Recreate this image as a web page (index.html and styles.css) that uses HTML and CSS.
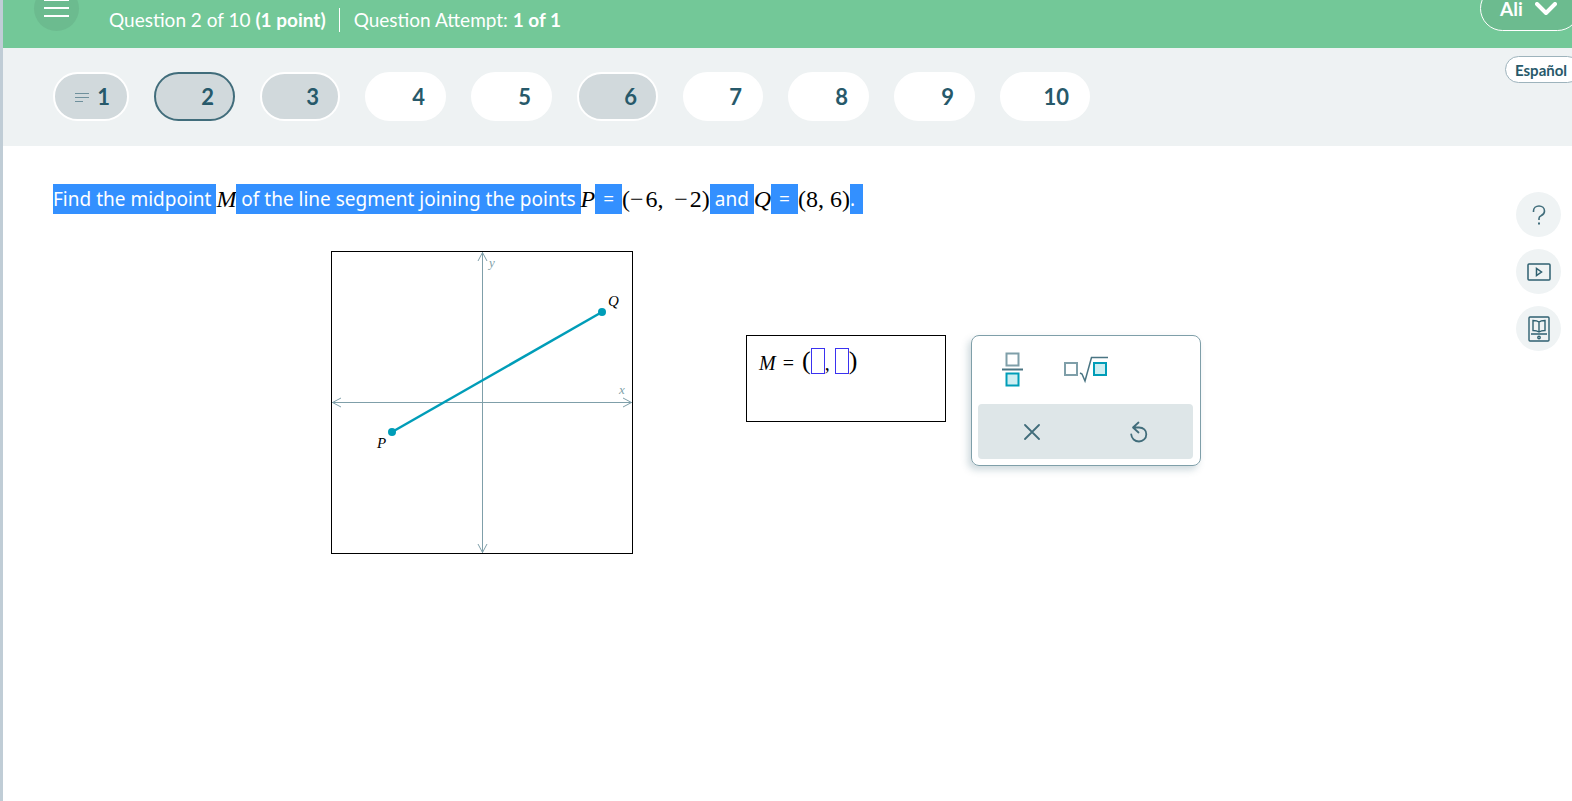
FILE: index.html
```html
<!DOCTYPE html>
<html lang="en">
<head>
    <meta charset="UTF-8">
    <meta name="viewport" content="width=device-width, initial-scale=1.0">
    <title>Question 2 of 10</title>
    <link rel="stylesheet" href="styles.css">
</head>
<body>
    <header class="topbar">
        <button class="menu-btn" aria-label="Menu">
            <svg width="26" height="20" viewBox="0 0 26 20" stroke="#fff" stroke-width="2">
                <path d="M0 1H25M0 9H25M0 17H25"/>
            </svg>
        </button>
        <p class="progress">Question 2 of 10 <b>(1 point)</b></p>
        <p class="attempt">Question Attempt: <b>1 of 1</b></p>
        <button class="user-btn">Ali
            <svg width="22" height="14" viewBox="0 0 22 14" fill="none" stroke="#fff" stroke-width="4" stroke-linecap="round" stroke-linejoin="round">
                <path d="M2 2L11 11L20 2"/>
            </svg>
        </button>
    </header>

    <nav class="questions">
        <button class="pill seen first">
            <svg width="14" height="10" viewBox="0 0 14 10" stroke="#6f909c">
                <path d="M0 1.500H14M0 5.500H14M0 9.500H8"/>
            </svg>
            1
        </button>
        <button class="pill seen current">2</button>
        <button class="pill seen narrow">3</button>
        <button class="pill">4</button>
        <button class="pill">5</button>
        <button class="pill seen">6</button>
        <button class="pill narrow">7</button>
        <button class="pill">8</button>
        <button class="pill">9</button>
        <button class="pill wide">10</button>
        <button class="lang-btn">Español</button>
    </nav>

    <main class="content">
        <section class="question">
            <p class="prompt"><span class="sel">Find the midpoint </span><i class="math">M</i><span class="sel"> of the line segment joining the points </span><i class="math">P</i><span class="sel equals"> = </span><span class="math">(−&#8202;6,&#8201; −&#8202;2)</span><span class="sel"> and </span><i class="math">Q</i><span class="sel equals"> = </span><span class="math">(8, 6)</span><span class="sel end">.</span></p>

            <div class="work">
                <svg class="graph" width="302" height="303" viewBox="0 0 302 303">
                    <rect x="0.5" y="0.5" width="301" height="302" fill="#fff" stroke="#000"/>
                    <g fill="none" stroke="#7f9fa9">
                        <path d="M1 151.500H301M151.500 1V302"/>
                        <path d="M10 147L1.500 151.500L10 156M292 147L300.500 151.500L292 156"/>
                        <path d="M147 10L151.500 1.500L156 10M147 293L151.500 301.500L156 293"/>
                    </g>
                    <path d="M61 181L271 61" stroke="#009db8" stroke-width="2.500"/>
                    <circle cx="61" cy="181" r="4" fill="#009db8"/>
                    <circle cx="271" cy="61" r="4" fill="#009db8"/>
                    <text x="158" y="16" class="axis">y</text>
                    <text x="288" y="143" class="axis">x</text>
                    <text x="46" y="197" class="point">P</text>
                    <text x="277" y="55" class="point">Q</text>
                </svg>

                <div class="tools">
                    <div class="answer">
                        <i>M</i><span class="eq">=</span><span class="paren">(</span><input type="text" aria-label="x coordinate of M"><span class="comma">,</span><input type="text" aria-label="y coordinate of M"><span class="paren">)</span>
                    </div>

                    <div class="keypad">
                        <div class="keys">
                            <button aria-label="Fraction">
                                <svg width="22" height="36" viewBox="0 0 22 36" fill="none">
                                    <rect x="4.500" y="1.500" width="12" height="12" stroke="#7f9fa9" stroke-width="2"/>
                                    <path d="M0 17.500H21" stroke="#4a7583" stroke-width="2"/>
                                    <rect x="4.500" y="21.500" width="12" height="12" fill="#cdeef2" stroke="#009db8" stroke-width="2"/>
                                </svg>
                            </button>
                            <button aria-label="Root">
                                <svg width="44" height="28" viewBox="0 0 44 28" fill="none">
                                    <rect x="1" y="7" width="12" height="12" stroke="#7f9fa9" stroke-width="2"/>
                                    <path d="M16 17L18 18L21 25L27.500 1.500H44" stroke="#4a7583" stroke-width="1.500"/>
                                    <rect x="30" y="7" width="12" height="12" fill="#cdeef2" stroke="#009db8" stroke-width="2"/>
                                </svg>
                            </button>
                        </div>
                        <div class="actions">
                            <button aria-label="Clear">
                                <svg width="16" height="16" viewBox="0 0 16 16" stroke="#416d7b" stroke-width="1.800" stroke-linecap="round">
                                    <path d="M1 1L15 15M15 1L1 15"/>
                                </svg>
                            </button>
                            <button aria-label="Undo">
                                <svg width="18" height="22" viewBox="0 0 18 22" fill="none" stroke="#416d7b" stroke-width="1.800" stroke-linecap="round" stroke-linejoin="round">
                                    <path d="M8.500 1.500L3 6.500L8.500 11.500M3.500 6.500H9C13.500 6.500 16.300 9.500 16.300 13.200C16.300 17.500 13 20.500 9 20.500C4.800 20.500 1.500 17.500 1.200 13.300"/>
                                </svg>
                            </button>
                        </div>
                    </div>
                </div>
            </div>
        </section>

        <aside class="sidebar">
            <button aria-label="Help">
                <svg width="14" height="20" viewBox="0 0 14 20" fill="none" stroke="#416d7b" stroke-width="1.600">
                    <path d="M1.500 7V6C1.500 3 4 1 7 1C10 1 12.500 3 12.500 6C12.500 8.500 11 9.800 9 10.800C7.500 11.500 7 12.300 7 13.500V15"/>
                    <path d="M7 17.500V19.500" stroke-width="2"/>
                </svg>
            </button>
            <button aria-label="Video">
                <svg width="24" height="18" viewBox="0 0 24 18" fill="none" stroke="#2f6070" stroke-width="1.500">
                    <rect x="1" y="1" width="22" height="16" rx="1"/>
                    <path d="M9.500 5.500V12.500L14.500 9Z"/>
                </svg>
            </button>
            <button aria-label="Textbook">
                <svg width="22" height="26" viewBox="0 0 22 26" fill="none" stroke="#2f6070" stroke-width="1.400">
                    <rect x="1" y="1" width="20" height="24" rx="1"/>
                    <path d="M3 18H19M11 6V16M11 6C9.500 4.800 7 4.500 5 4.500V14.500C7.500 14.500 9.500 15 11 16C12.500 15 14.500 14.500 17 14.500V4.500C15 4.500 12.500 4.800 11 6"/>
                    <circle cx="11" cy="21.500" r="1.200"/>
                </svg>
            </button>
        </aside>
    </main>
</body>
</html>
```

FILE: styles.css
```css
* {
    box-sizing: border-box;
}
body {
    margin: 0;
    min-height: 100vh;
    border-left: 3px solid #c0cdd6;
    background: #fff;
    font-family: Lato, "Liberation Sans", sans-serif;
    overflow-x: hidden;
}
p {
    margin: 0;
}
button {
    display: flex;
    align-items: center;
    justify-content: center;
    padding: 0;
    border: 0;
    background: none;
    font-family: inherit;
    cursor: pointer;
}

/* top bar */
.topbar {
    display: flex;
    align-items: flex-start;
    height: 48px;
    padding-left: 31px;
    overflow: hidden;
    background: #73c898;
    color: #fff;
    font-size: 19px;
    line-height: 24px;
}
.menu-btn {
    width: 45px;
    height: 45px;
    margin-top: -14px;
    border-radius: 50%;
    background: #6cbb8f;
}
.progress {
    margin: 8px 0 0 30px;
    padding-right: 13px;
    border-right: 1px solid #fff;
}
.attempt {
    margin: 8px 0 0 14px;
}
.user-btn {
    flex-shrink: 0;
    justify-content: flex-start;
    gap: 12px;
    width: 100px;
    height: 45px;
    margin: -14px -8px 0 auto;
    padding-left: 19px;
    border: 1px solid #fff;
    border-radius: 23px;
    background: #6cbb8f;
    color: #fff;
    font-size: 19px;
    font-weight: bold;
    line-height: 16px;
}

/* question list */
.questions {
    display: flex;
    gap: 25px;
    height: 98px;
    padding: 24px 0 0 50px;
    background: #eef2f3;
}
.pill {
    flex-shrink: 0;
    justify-content: flex-end;
    width: 81px;
    height: 49px;
    padding-right: 19px;
    border: 2px solid #fff;
    border-radius: 25px;
    background: #fff;
    color: #27596a;
    font-size: 22px;
    font-weight: bold;
}
.pill.seen {
    background: #d1d9dc;
}
.pill.current {
    border-color: #416d7b;
}
.pill.first {
    gap: 8px;
    width: 76px;
    padding-right: 17px;
}
.pill.narrow {
    width: 80px;
}
.pill.wide {
    width: 90px;
}
.lang-btn {
    flex-shrink: 0;
    justify-content: flex-start;
    width: 76px;
    height: 27px;
    margin: -16px -9px 0 auto;
    padding-left: 9px;
    border: 1px solid #9db3bc;
    border-radius: 14px;
    background: #fff;
    color: #27596a;
    font-size: 15px;
    font-weight: bold;
}

/* question */
.content {
    display: flex;
    justify-content: space-between;
}
.question {
    flex: 1;
    padding: 38px 0 0 50px;
}
.prompt {
    display: flex;
    flex-wrap: wrap;
    line-height: 30px;
    white-space: pre;
}
.sel {
    background: #3390ff;
    color: #fff;
    font-family: "Noto Sans", sans-serif;
    font-size: 19px;
}
.sel.equals {
    padding: 0 3px;
}
.sel.end {
    padding-right: 8px;
}
.math {
    font-family: "Liberation Serif", serif;
    font-size: 24px;
}
.work {
    display: flex;
    align-items: center;
    justify-content: center;
    gap: 113px;
    margin-top: 37px;
}
.graph {
    flex-shrink: 0;
    font-family: "Liberation Serif", serif;
    font-style: italic;
}
.axis {
    fill: #7f9fa9;
    font-size: 13px;
}
.point {
    font-size: 15px;
}
.tools {
    display: flex;
    align-items: flex-start;
    gap: 25px;
    margin-bottom: 4px;
}
.answer {
    display: flex;
    align-items: flex-start;
    width: 200px;
    height: 87px;
    padding: 12px;
    border: 1px solid #000;
    font-family: "Liberation Serif", serif;
    font-size: 20px;
    line-height: 30px;
}
.answer .eq {
    margin: 0 8px 0 7px;
}
.answer .paren {
    font-size: 26px;
    line-height: 26px;
}
.answer .comma {
    width: 10px;
}
.answer input {
    width: 14px;
    height: 26px;
    padding: 0;
    border: 1px solid #3a32f0;
    outline: 0;
}

/* keypad */
.keypad {
    width: 230px;
    padding: 6px 7px 6px 6px;
    border: 1px solid #7f9fa9;
    border-radius: 8px;
    box-shadow: -3px 4px 7px rgba(65, 109, 123, 0.25);
}
.keys {
    display: flex;
    align-items: center;
    gap: 40px;
    height: 62px;
    padding: 0 0 6px 24px;
}
.actions {
    display: grid;
    grid-template-columns: 1fr 1fr;
    height: 55px;
    border-radius: 4px;
    background: #dee6e8;
}

/* side buttons */
.sidebar {
    display: flex;
    flex-direction: column;
    gap: 12px;
    padding: 46px 11px 0 37px;
}
.sidebar button {
    width: 45px;
    height: 45px;
    border-radius: 50%;
    background: #eff3f4;
}
```
